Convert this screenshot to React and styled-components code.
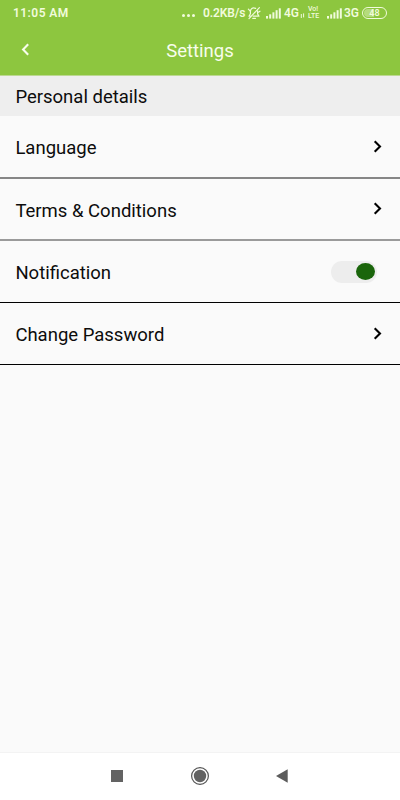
import React, { useState } from "react";
import styled, { createGlobalStyle } from "styled-components";

const links = [
  { label: "Language", line: 2, lineColor: "#868686" },
  { label: "Terms & Conditions", line: 2, lineColor: "#9a9a9a" },
  { label: "Notification", toggle: true },
  { label: "Change Password" },
];

function Signal() {
  return (
    <svg width="15" height="11" viewBox="0 0 15 11" fill="currentColor">
      <rect x="0" y="8" width="2" height="2.6" />
      <rect x="3.2" y="6.3" width="2" height="4.3" />
      <rect x="6.4" y="4.3" width="2" height="6.3" />
      <rect x="9.6" y="2.2" width="2" height="8.4" />
      <rect x="12.8" y="0.3" width="2" height="10.3" />
    </svg>
  );
}

function MutedBell() {
  return (
    <svg
      width="14"
      height="14"
      viewBox="0 0 14 14"
      fill="none"
      stroke="currentColor"
      strokeWidth="1.2"
      strokeLinecap="round"
      strokeLinejoin="round"
    >
      <path d="M8.6 2.4C5.5 1 3.4 2.8 3.4 5.5v2.2L2 10.2h1.4M10.6 4.8v3.1l1.4 2.3H6.2" />
      <path d="M5.8 12.4h2.6M12.4 1.6 2 12.6M1.4 3.2l1.6 1.6M11.4 6.2l1.6-1" />
    </svg>
  );
}

function Chevron({ left }) {
  return (
    <svg
      width="9"
      height="13"
      viewBox="0 0 9 13"
      fill="none"
      stroke="currentColor"
      strokeWidth="2.1"
    >
      <path d={left ? "M7.2 1.3 2.1 6.5l5.1 5.2" : "M1.7 1.2 7 6.5l-5.3 5.3"} />
    </svg>
  );
}

function App() {
  const [on, setOn] = useState(true);

  return (
    <Screen>
      <GlobalStyle />
      <StatusBar>
        <Time>11:05 AM</Time>
        <Dots>
          <i />
          <i />
          <i />
        </Dots>
        <Speed>0.2KB/s</Speed>
        <Slot $w={19}>
          <MutedBell />
        </Slot>
        <Slot $w={18}>
          <Signal />
        </Slot>
        <Network $w={16}>4G</Network>
        <Slot $w={8}>
          <svg width="5" height="12" viewBox="0 0 5 12" stroke="currentColor">
            <path d="M1.3 7v4M3.6 6.4v4" strokeWidth="1" />
          </svg>
        </Slot>
        <Volte>
          <span>Vo!</span>
          <span>LTE</span>
        </Volte>
        <Slot $w={17}>
          <Signal />
        </Slot>
        <Network $w={18}>3G</Network>
        <Battery>
          <span>48</span>
        </Battery>
      </StatusBar>
      <Header>
        <Back aria-label="Back">
          <Chevron left />
        </Back>
        <Title>Settings</Title>
      </Header>
      <Section>Personal details</Section>
      <List>
        {links.map((item) => (
          <Row key={item.label} $line={item.line} $lineColor={item.lineColor}>
            <Label>{item.label}</Label>
            {item.toggle ? (
              <Track
                role="switch"
                aria-checked={on}
                $on={on}
                onClick={() => setOn(!on)}
              >
                <Thumb $on={on} />
              </Track>
            ) : (
              <Arrow>
                <Chevron />
              </Arrow>
            )}
          </Row>
        ))}
      </List>
      <NavBar>
        <svg width="12" height="12" viewBox="0 0 12 12">
          <rect width="12" height="12" fill="#636363" />
        </svg>
        <svg width="20" height="20" viewBox="0 0 20 20">
          <circle
            cx="10"
            cy="10"
            r="8.4"
            fill="none"
            stroke="#555"
            strokeWidth="1.2"
          />
          <circle cx="10" cy="10" r="6.2" fill="#636363" />
        </svg>
        <svg width="12" height="14" viewBox="0 0 12 14">
          <path d="M0 7 11.7 0.3v13.4z" fill="#5c5c5c" />
        </svg>
      </NavBar>
    </Screen>
  );
}

const GlobalStyle = createGlobalStyle`
  * {
    box-sizing: border-box;
  }
  body {
    margin: 0;
    font-family: Roboto, "Liberation Sans", sans-serif;
  }
  svg {
    display: block;
    flex-shrink: 0;
  }
`;

const Screen = styled.div`
  width: 100%;
  height: 100vh;
  display: flex;
  flex-direction: column;
  background: #fafafa;
  color: #0c0c0c;
  overflow: hidden;
`;

const StatusBar = styled.div`
  height: 26px;
  flex-shrink: 0;
  display: flex;
  align-items: center;
  padding: 0 13px;
  background: #8dc63f;
  color: #f1fbdc;
  font-size: 12px;
  font-weight: 600;
  white-space: nowrap;
`;

const Time = styled.span`
  width: 169px;
  letter-spacing: 0.45px;
`;

const Dots = styled.div`
  width: 21px;
  display: flex;
  gap: 2px;
  padding-top: 5px;
  i {
    width: 3px;
    height: 3px;
    border-radius: 50%;
    background: currentColor;
  }
`;

const Speed = styled.span`
  width: 44px;
  letter-spacing: -0.1px;
`;

const Slot = styled.div`
  width: ${(p) => p.$w}px;
  flex-shrink: 0;
`;

const Network = styled.span`
  width: ${(p) => p.$w}px;
  flex-shrink: 0;
`;

const Volte = styled.div`
  width: 19px;
  flex-shrink: 0;
  display: flex;
  flex-direction: column;
  font-size: 7px;
  font-weight: 500;
  line-height: 7px;
  span + span {
    margin-top: -0.5px;
  }
`;

const Battery = styled.div`
  width: 25px;
  height: 12px;
  flex-shrink: 0;
  padding: 1px;
  border: 1px solid currentColor;
  border-radius: 6px;
  span {
    display: block;
    height: 8px;
    border-radius: 4px;
    background: linear-gradient(90deg, #b5dc7c 50%, transparent 50%);
    font-size: 9px;
    line-height: 9px;
    text-align: center;
  }
`;

const Header = styled.header`
  height: 50px;
  flex-shrink: 0;
  display: grid;
  grid-template-columns: 60px 1fr 60px;
  align-items: center;
  background: #8dc63f;
  border-bottom: 1px solid #bcd891;
  color: #f8fdec;
`;

const Back = styled.button`
  border: none;
  background: none;
  color: inherit;
  padding: 0 0 3px 21px;
  cursor: pointer;
`;

const Title = styled.h1`
  margin: 0;
  font-size: 18.5px;
  font-weight: 400;
  text-align: center;
`;

const Section = styled.div`
  height: 40px;
  flex-shrink: 0;
  display: flex;
  align-items: center;
  padding: 1px 15px 0 15.4px;
  background: #eeeeee;
  font-size: 18.5px;
`;

const List = styled.div`
  flex: 1;
`;

const Row = styled.div`
  display: flex;
  align-items: center;
  justify-content: space-between;
  height: ${(p) => (p.$line ? 62.5 : 62)}px;
  padding: ${(p) => (p.$line ? 2 : 1)}px 15px 0 15.4px;
  border-bottom: ${(p) => p.$line || 1}px solid ${(p) => p.$lineColor || "#000"};
  font-size: 18.5px;
`;

const Label = styled.span`
  padding-top: 1.5px;
`;

const Arrow = styled.div`
  width: 12px;
  padding: 0 0 2px;
  color: #000;
`;

const Track = styled.button`
  width: 46px;
  height: 22px;
  display: flex;
  align-items: center;
  justify-content: ${(p) => (p.$on ? "flex-end" : "flex-start")};
  margin: 0 8px 1px 0;
  padding: 0 2px;
  border: none;
  border-radius: 11px;
  background: #ededed;
  cursor: pointer;
`;

const Thumb = styled.span`
  width: 19px;
  height: 17px;
  border-radius: 50%;
  background: ${(p) => (p.$on ? "#1a650b" : "#9e9e9e")};
`;

const NavBar = styled.nav`
  height: 48px;
  flex-shrink: 0;
  display: flex;
  align-items: center;
  justify-content: space-between;
  padding: 0 112px 2px 111px;
  background: #fff;
  border-top: 1px solid #f3f3f3;
`;

export default App;
